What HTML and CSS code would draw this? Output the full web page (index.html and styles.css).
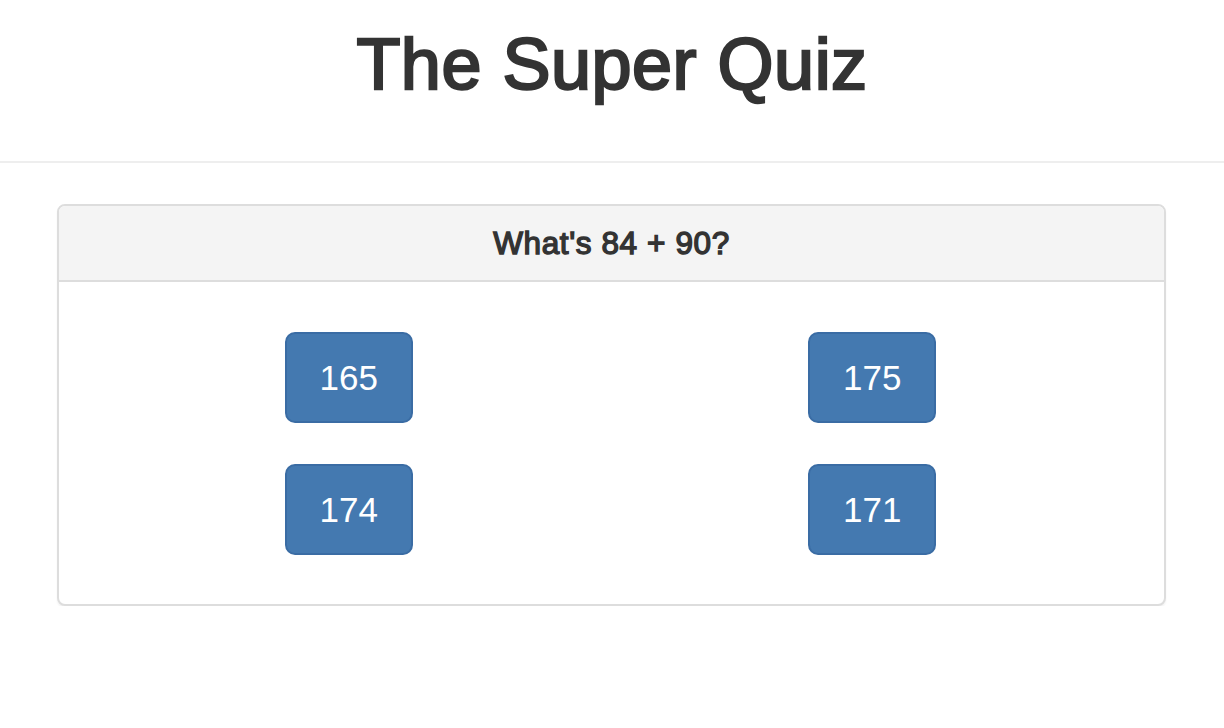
FILE: index.html
```html
<!DOCTYPE html>
<html lang="en">
<head>
<meta charset="utf-8">
<title>The Super Quiz</title>
<link rel="stylesheet" href="styles.css">
</head>
<body>
  <header class="page-header">
    <h1 class="title">The Super Quiz</h1>
  </header>
  <main class="container">
    <section class="panel">
      <div class="panel-heading">
        <h3 class="panel-title">What's 84 + 90?</h3>
      </div>
      <div class="panel-body">
        <div class="answer"><button class="btn">165</button></div>
        <div class="answer"><button class="btn">175</button></div>
        <div class="answer"><button class="btn">174</button></div>
        <div class="answer"><button class="btn">171</button></div>
      </div>
    </section>
  </main>
</body>
</html>
```
FILE: styles.css
```css
* { box-sizing: border-box; }
html, body {
  margin: 0;
  padding: 0;
  background: #fff;
}
body {
  font-family: "Liberation Sans", Arial, Helvetica, sans-serif;
  color: #333;
}
.page-header {
  padding: 25px 0 57px;
  border-bottom: 2px solid #eee;
}
.title {
  margin: 0;
  font-size: 72px;
  font-weight: normal;
  -webkit-text-stroke: 2.4px #333;
  letter-spacing: 0.5px;
  line-height: 1.1;
  text-align: center;
  color: #333;
}
.container {
  padding: 41px 58px 0 57px;
}
.panel {
  border: 2px solid #ddd;
  border-radius: 8px;
  background: #fff;
  box-shadow: 0 2px 2px rgba(0, 0, 0, 0.05);
  overflow: hidden;
}
.panel-heading {
  background: #f4f4f4;
  border-bottom: 2px solid #ddd;
  padding: 20px 30px;
}
.panel-title {
  margin: 0;
  font-size: 31.5px;
  font-weight: normal;
  -webkit-text-stroke: 1.4px #333;
  letter-spacing: 0.6px;
  line-height: 34px;
  text-align: center;
  color: #333;
}
.panel-body {
  display: grid;
  grid-template-columns: 1fr 1fr;
  row-gap: 41px;
  padding: 50px 30px 49px 28px;
}
.answer {
  display: flex;
  justify-content: center;
}
.btn {
  width: 128px;
  height: 91px;
  padding: 20px 0;
  font-family: "Liberation Sans", Arial, Helvetica, sans-serif;
  font-size: 35px;
  line-height: 47px;
  color: #fff;
  background: #4479b0;
  border: 2px solid #3a6ca4;
  border-radius: 10px;
  text-align: center;
  cursor: pointer;
}
```
